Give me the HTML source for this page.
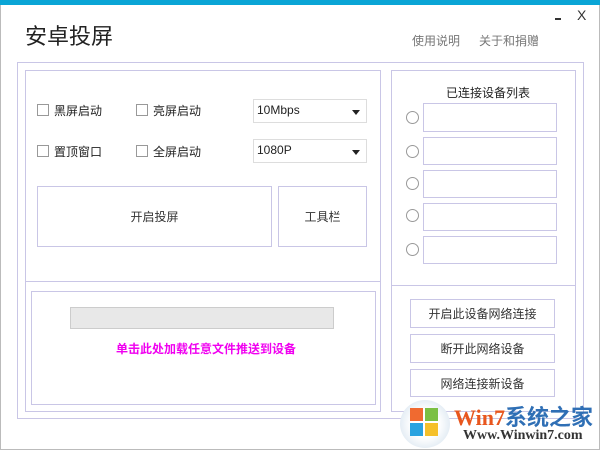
<!DOCTYPE html>
<html><head><meta charset="utf-8"><style>
*{margin:0;padding:0;box-sizing:border-box}
body{width:600px;height:450px;background:#fff;position:relative;overflow:hidden;font-family:"Liberation Sans","Noto Sans CJK SC",sans-serif;color:#222}
.a{position:absolute}
.b{position:absolute;border:1px solid #c9c6e6;background:#fff}
.t{font-size:12px;position:absolute;white-space:nowrap}
.cb{position:absolute;width:12px;height:12px;border:1px solid #999;background:#fff}
.rd{position:absolute;width:13px;height:13px;border:1px solid #999;border-radius:50%;background:#fff}
.btn{position:absolute;border:1px solid #c9c6e6;background:#fff;font-size:12px;display:flex;align-items:center;justify-content:center;color:#333}
.dd{position:absolute;border:1px solid #ddd;background:#fff;font-size:12px;padding:3px 0 0 3px}
.dd:after{content:"";position:absolute;right:6px;top:10px;border-left:4px solid transparent;border-right:4px solid transparent;border-top:5px solid #222}
</style></head><body>
<div class="a" style="left:0;top:0;width:600px;height:5px;background:#0aa5d6"></div>
<div class="a" style="left:0;top:5px;width:600px;height:445px;border:1px solid #bbb;border-top:none"></div>
<div class="t" style="left:25px;top:19px;font-size:22px;color:#222">安卓投屏</div>
<div class="t" style="left:412px;top:32px;color:#777">使用说明</div>
<div class="t" style="left:479px;top:32px;color:#777">关于和捐赠</div>
<div class="a" style="left:555px;top:18px;width:6px;height:2px;background:#333"></div>
<div class="t" style="left:577px;top:7px;font-size:14px;color:#333">X</div>
<div class="b" style="left:17px;top:62px;width:567px;height:357px"></div>
<div class="b" style="left:25px;top:70px;width:356px;height:342px"></div>
<div class="a" style="left:25px;top:281px;width:356px;height:1px;background:#c9c6e6"></div>
<div class="b" style="left:31px;top:291px;width:345px;height:114px"></div>
<div class="a" style="left:70px;top:307px;width:264px;height:22px;background:#e8e8e8;border:1px solid #ccc"></div>
<div class="t" style="left:116px;top:340px;color:#f000f0;font-weight:bold">单击此处加载任意文件推送到设备</div>
<div class="cb" style="left:37px;top:104px"></div><div class="t" style="left:54px;top:102px">黑屏启动</div>
<div class="cb" style="left:136px;top:104px"></div><div class="t" style="left:153px;top:102px">亮屏启动</div>
<div class="cb" style="left:37px;top:145px"></div><div class="t" style="left:54px;top:143px">置顶窗口</div>
<div class="cb" style="left:136px;top:145px"></div><div class="t" style="left:153px;top:143px">全屏启动</div>
<div class="dd" style="left:253px;top:99px;width:114px;height:24px">10Mbps</div>
<div class="dd" style="left:253px;top:139px;width:114px;height:24px">1080P</div>
<div class="btn" style="left:37px;top:186px;width:235px;height:61px">开启投屏</div>
<div class="btn" style="left:278px;top:186px;width:89px;height:61px">工具栏</div>
<div class="b" style="left:391px;top:70px;width:185px;height:342px"></div>
<div class="a" style="left:391px;top:285px;width:185px;height:1px;background:#c9c6e6"></div>
<div class="t" style="left:446px;top:84px">已连接设备列表</div>
<div class="rd" style="left:406px;top:111px"></div><div class="b" style="left:423px;top:103px;width:134px;height:29px"></div>
<div class="rd" style="left:406px;top:145px"></div><div class="b" style="left:423px;top:137px;width:134px;height:28px"></div>
<div class="rd" style="left:406px;top:177px"></div><div class="b" style="left:423px;top:170px;width:134px;height:28px"></div>
<div class="rd" style="left:406px;top:209px"></div><div class="b" style="left:423px;top:203px;width:134px;height:28px"></div>
<div class="rd" style="left:406px;top:243px"></div><div class="b" style="left:423px;top:236px;width:134px;height:28px"></div>
<div class="btn" style="left:410px;top:299px;width:145px;height:29px">开启此设备网络连接</div>
<div class="btn" style="left:410px;top:334px;width:145px;height:29px">断开此网络设备</div>
<div class="btn" style="left:410px;top:369px;width:145px;height:28px">网络连接新设备</div>
<div class="a" style="left:400px;top:400px;width:50px;height:48px;border-radius:50%;background:radial-gradient(circle,#fff 40%,#e6eef5 70%,#cfd8e0)"></div>
<div class="a" style="left:410px;top:408px;width:13px;height:13px;background:#f06a30"></div>
<div class="a" style="left:425px;top:408px;width:13px;height:13px;background:#7bc043"></div>
<div class="a" style="left:410px;top:423px;width:13px;height:13px;background:#2aa3e0"></div>
<div class="a" style="left:425px;top:423px;width:13px;height:13px;background:#f5c02a"></div>
<div class="t" style="left:454px;top:400px;font-size:22px;font-weight:bold;color:#e8561e;font-family:'Liberation Serif',serif">Win7<span style="color:#2f6fb5;font-family:'Noto Sans CJK SC',sans-serif">系统之家</span></div>
<div class="t" style="left:463px;top:428px;font-size:14px;font-weight:bold;color:#333;font-family:'Liberation Serif',serif">Www.Winwin7.com</div>
</body></html>
